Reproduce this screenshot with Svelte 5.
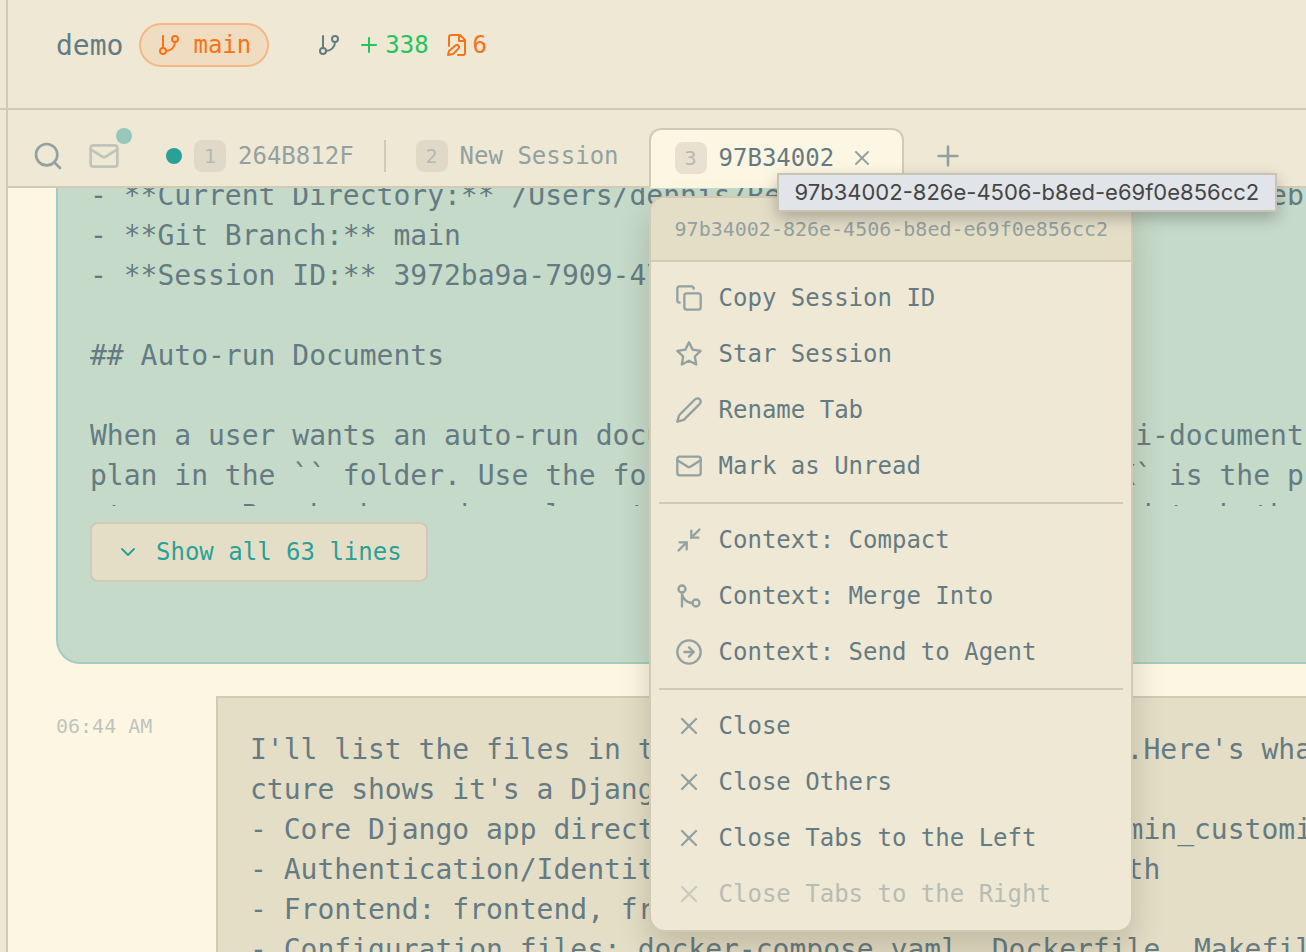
<script lang="ts">
  type Item = { icon: string; label: string; disabled?: boolean };

  const sessionId = "97b34002-826e-4506-b8ed-e69f0e856cc2";

  const icons: Record<string, string[]> = {
    branch: [
      "M6 3v12",
      "M21 6a3 3 0 1 1-6 0 3 3 0 0 1 6 0z",
      "M9 18a3 3 0 1 1-6 0 3 3 0 0 1 6 0z",
      "M18 9a9 9 0 0 1-9 9",
    ],
    plus: ["M5 12h14", "M12 5v14"],
    fileEdit: [
      "M4 13V4a2 2 0 0 1 2-2h9l5 5v13a2 2 0 0 1-2 2h-5",
      "M14 2v6h6",
      "M10.4 12.6a2.1 2.1 0 1 1 3 3L8 21l-5 1 1-4z",
    ],
    search: ["M19 11a8 8 0 1 1-16 0 8 8 0 0 1 16 0z", "m21 21-4.3-4.3"],
    mail: [
      "M4 4h16a2 2 0 0 1 2 2v12a2 2 0 0 1-2 2H4a2 2 0 0 1-2-2V6a2 2 0 0 1 2-2z",
      "m22 7-8.97 5.7a1.94 1.94 0 0 1-2.06 0L2 7",
    ],
    x: ["M18 6 6 18", "m6 6 12 12"],
    chevron: ["m6 9 6 6 6-6"],
    copy: [
      "M10 8h10a2 2 0 0 1 2 2v10a2 2 0 0 1-2 2H10a2 2 0 0 1-2-2V10a2 2 0 0 1 2-2z",
      "M4 16c-1.1 0-2-.9-2-2V4c0-1.1.9-2 2-2h10c1.1 0 2 .9 2 2",
    ],
    star: [
      "M12 2l3.09 6.26L22 9.27l-5 4.87 1.18 6.88L12 17.77l-6.18 3.25L7 14.14 2 9.27l6.91-1.01z",
    ],
    pencil: ["M17 3a2.85 2.83 0 1 1 4 4L7.5 20.5 2 22l1.5-5.5z"],
    compact: ["M4 14h6v6", "M20 10h-6V4", "m14 10 7-7", "m3 21 7-7"],
    merge: [
      "M21 18a3 3 0 1 1-6 0 3 3 0 0 1 6 0z",
      "M9 6a3 3 0 1 1-6 0 3 3 0 0 1 6 0z",
      "M6 21V9a9 9 0 0 0 9 9",
    ],
    send: ["M22 12a10 10 0 1 1-20 0 10 10 0 0 1 20 0z", "M8 12h8", "m12 16 4-4-4-4"],
  };

  const groups: Item[][] = [
    [
      { icon: "copy", label: "Copy Session ID" },
      { icon: "star", label: "Star Session" },
      { icon: "pencil", label: "Rename Tab" },
      { icon: "mail", label: "Mark as Unread" },
    ],
    [
      { icon: "compact", label: "Context: Compact" },
      { icon: "merge", label: "Context: Merge Into" },
      { icon: "send", label: "Context: Send to Agent" },
    ],
    [
      { icon: "x", label: "Close" },
      { icon: "x", label: "Close Others" },
      { icon: "x", label: "Close Tabs to the Left" },
      { icon: "x", label: "Close Tabs to the Right", disabled: true },
    ],
  ];

  const prompt = [
    "- **Current Directory:** /Users/dennis/Repositories/apps/demo-django-web",
    "- **Git Branch:** main",
    "- **Session ID:** 3972ba9a-7909-4721-a1b0",
    "",
    "## Auto-run Documents",
    "",
    "When a user wants an auto-run document, build a single or multi-document",
    "plan in the `` folder. Use the format `$NAME-XX.md`, where `XX` is the phase",
    "streams. Break phases by relevant context, and keep them linked to both",
  ].join("\n");

  const reply = [
    "I'll list the files in the current working directory.Here's what",
    "cture shows it's a Django project with the layout:",
    "- Core Django app directories: apps, core, utils, admin_customize",
    "- Authentication/Identity: accounts, identity, ms_auth",
    "- Frontend: frontend, front_static",
    "- Configuration files: docker-compose.yaml, Dockerfile, Makefile",
  ].join("\n");
</script>

{#snippet icon(name: string, size: number)}
  <svg class="icon" width={size} height={size} viewBox="0 0 24 24" aria-hidden="true">
    {#each icons[name] as d}
      <path {d} />
    {/each}
  </svg>
{/snippet}

<div class="app">
  <aside class="sidebar"><div class="sidebar-head"></div></aside>

  <main class="main">
    <header class="header">
      <span class="project">demo</span>
      <button class="branch">{@render icon("branch", 24)}<span>main</span></button>
      <div class="stats">
        {@render icon("branch", 24)}
        <span class="stat added">{@render icon("plus", 24)}338</span>
        <span class="stat changed">{@render icon("fileEdit", 24)}6</span>
      </div>
    </header>

    <nav class="tabs">
      <button class="tool" aria-label="Search tabs">{@render icon("search", 32)}</button>
      <button class="tool unread" aria-label="Filter unread">
        {@render icon("mail", 32)}
        <span class="unread-dot"></span>
      </button>
      <button class="tab first">
        <span class="dot"></span>
        <span class="num">1</span>
        264B812F
      </button>
      <span class="tab-divider"></span>
      <button class="tab">
        <span class="num">2</span>
        New Session
      </button>
      <div class="tab active">
        <span class="num">3</span>
        97B34002
        <button class="close" aria-label="Close tab">{@render icon("x", 24)}</button>

        <div class="menu" role="menu">
          <div class="menu-head">{sessionId}</div>
          {#each groups as group}
            <div class="group">
              {#each group as item}
                <button class="item" role="menuitem" disabled={item.disabled}>
                  {@render icon(item.icon, 28)}
                  {item.label}
                </button>
              {/each}
            </div>
          {/each}
        </div>
        <div class="tooltip" role="tooltip">{sessionId}</div>
      </div>
      <button class="tool add" aria-label="New tab">{@render icon("plus", 32)}</button>
    </nav>

    <section class="messages">
      <article class="bubble user">
        <pre class="text clipped">{prompt}</pre>
        <button class="show-all">{@render icon("chevron", 24)}Show all 63 lines</button>
      </article>
      <div class="row">
        <time class="time">06:44 AM</time>
        <article class="bubble agent">
          <pre class="text">{reply}</pre>
        </article>
      </div>
    </section>
  </main>
</div>

<style>
  :global(body) {
    margin: 0;
  }

  .app {
    --bg: #fdf6e3;
    --panel: #efe8d5;
    --activity: #e5dec7;
    --border: #d3cab6;
    --text: #657b83;
    --dim: #93a1a1;
    --accent: #2aa198;
    display: flex;
    height: 100vh;
    overflow: hidden;
    background: var(--bg);
    color: var(--text);
    font-family: Menlo, "DejaVu Sans Mono", monospace;
    font-size: 24px;
  }

  button {
    display: flex;
    align-items: center;
    margin: 0;
    padding: 0;
    border: 0;
    background: none;
    color: inherit;
    font: inherit;
    white-space: nowrap;
    cursor: pointer;
  }

  .icon {
    flex: none;
    fill: none;
    stroke: currentColor;
    stroke-width: 2;
    stroke-linecap: round;
    stroke-linejoin: round;
  }

  .sidebar {
    flex: none;
    width: 6px;
    border-right: 2px solid var(--border);
    background: var(--panel);
  }
  .sidebar-head {
    height: 108px;
    border-bottom: 2px solid var(--border);
  }

  .main {
    display: flex;
    flex: 1;
    flex-direction: column;
    min-width: 0;
  }

  .header {
    display: flex;
    flex: none;
    align-items: center;
    box-sizing: border-box;
    height: 110px;
    padding: 0 48px 18px;
    border-bottom: 2px solid var(--border);
    background: var(--panel);
  }
  .project {
    font-size: 28px;
  }
  .branch {
    gap: 12px;
    box-sizing: border-box;
    height: 44px;
    margin-left: 16px;
    padding: 0 16px;
    border: 2px solid rgba(249, 115, 22, 0.35);
    border-radius: 22px;
    background: rgba(249, 115, 22, 0.1);
    color: #f97316;
  }
  .stats {
    display: flex;
    align-items: center;
    gap: 16px;
    margin-left: 48px;
  }
  .stat {
    display: flex;
    align-items: center;
    gap: 4px;
  }
  .added {
    color: #22c55e;
  }
  .changed {
    color: #f97316;
  }

  .tabs {
    position: relative;
    z-index: 1;
    display: flex;
    flex: none;
    align-items: flex-start;
    box-sizing: border-box;
    height: 78px;
    padding: 18px 24px 0;
    border-bottom: 2px solid var(--border);
    background: var(--panel);
    color: var(--dim);
  }
  .tool {
    position: relative;
    height: 56px;
  }
  .unread {
    margin-left: 24px;
  }
  .unread .icon {
    opacity: 0.5;
  }
  .unread-dot {
    position: absolute;
    top: 0;
    right: -12px;
    width: 16px;
    height: 16px;
    border-radius: 50%;
    background: var(--accent);
    opacity: 0.45;
  }
  .tab {
    display: flex;
    align-items: center;
    gap: 12px;
    box-sizing: border-box;
    height: 56px;
    padding: 0 26px;
    white-space: nowrap;
  }
  .tab.first {
    margin-left: 20px;
  }
  .tab.active {
    position: relative;
    height: 60px;
    margin-left: 4px;
    padding: 0 24px;
    border: 2px solid var(--border);
    border-bottom-color: var(--bg);
    border-radius: 12px 12px 0 0;
    background: var(--bg);
    color: var(--text);
  }
  .tab-divider {
    width: 2px;
    height: 32px;
    margin: 12px 4px 0;
    background: var(--border);
  }
  .dot {
    width: 16px;
    height: 16px;
    border-radius: 50%;
    background: var(--accent);
  }
  .num {
    width: 32px;
    height: 32px;
    border-radius: 8px;
    background: #e0d9c7;
    color: #b3bab3;
    font-size: 20px;
    line-height: 32px;
    text-align: center;
  }
  .active .num {
    background: #e9e0cf;
  }
  .close {
    padding: 4px;
    color: var(--dim);
  }
  .add {
    margin-left: 28px;
  }

  .menu {
    position: absolute;
    top: 66px;
    left: -2px;
    z-index: 2;
    box-sizing: border-box;
    width: 484px;
    overflow: hidden;
    border: 2px solid var(--border);
    border-radius: 16px;
    background: var(--panel);
    box-shadow: 0 16px 32px rgba(60, 50, 20, 0.2);
  }
  .menu-head {
    padding: 0 24px;
    border-bottom: 2px solid var(--border);
    background: var(--activity);
    color: var(--dim);
    font-size: 20px;
    line-height: 62px;
  }
  .group {
    padding: 8px 0;
  }
  .group + .group {
    padding-top: 0;
  }
  .group + .group::before {
    content: "";
    display: block;
    height: 2px;
    margin: 0 8px 8px;
    background: var(--border);
  }
  .item {
    gap: 16px;
    width: 100%;
    height: 56px;
    padding: 0 24px;
  }
  .item .icon {
    color: var(--dim);
  }
  .item:disabled {
    opacity: 0.4;
    cursor: default;
  }

  .tooltip {
    position: absolute;
    top: 43px;
    left: 126px;
    z-index: 3;
    padding: 0 16px;
    border: 2px solid #c9c3b4;
    background: #e1e4e8;
    box-shadow: 0 6px 16px rgba(0, 0, 0, 0.25);
    color: #454545;
    font-family: Inter, sans-serif;
    font-size: 22px;
    line-height: 35px;
    white-space: nowrap;
  }

  .messages {
    display: flex;
    flex: 1;
    flex-direction: column;
    gap: 32px;
    min-height: 0;
    overflow: hidden;
    padding-left: 48px;
  }
  .bubble {
    flex: 1 0 auto;
    border: 2px solid var(--border);
    border-right: 0;
  }
  .user {
    flex: none;
    padding: 0 0 80px 32px;
    border-top: 0;
    border-color: #a0cdbd;
    border-bottom-left-radius: 24px;
    background: #c6dac9;
  }
  .agent {
    padding: 32px;
    background: var(--activity);
  }
  .text {
    margin: 0;
    font-family: inherit;
    font-size: 28px;
    line-height: 40px;
  }
  .clipped {
    max-height: 330px;
    margin-top: -12px;
    overflow: hidden;
  }
  .show-all {
    gap: 16px;
    height: 60px;
    margin-top: 16px;
    padding: 0 24px;
    border: 2px solid var(--border);
    border-radius: 8px;
    background: var(--activity);
    color: var(--accent);
  }
  .row {
    display: flex;
    flex: none;
  }
  .time {
    flex: none;
    width: 160px;
    padding-top: 18px;
    opacity: 0.4;
    font-size: 20px;
  }
</style>
